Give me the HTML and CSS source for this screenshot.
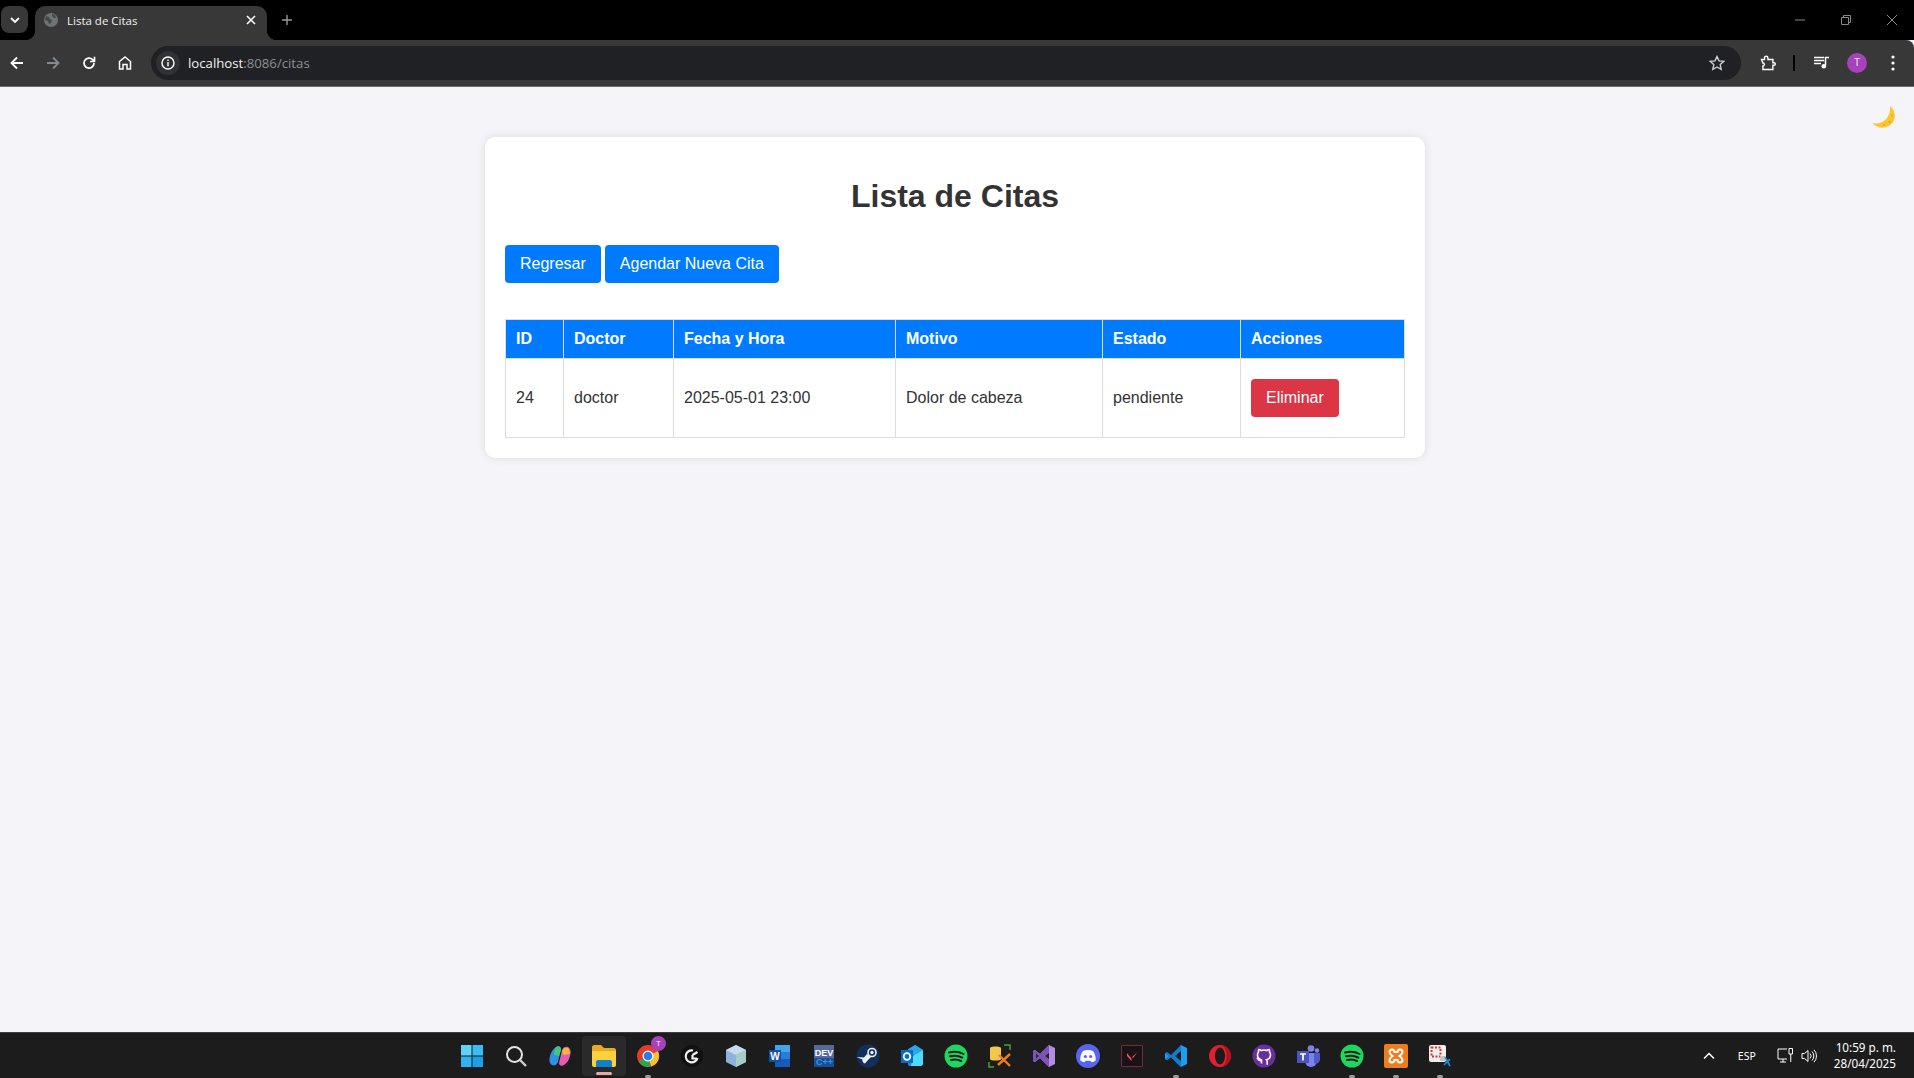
FILE: index.html
```html
<!DOCTYPE html>
<html lang="es">
<head>
  <meta charset="utf-8">
  <title>Lista de Citas</title>
  <link rel="stylesheet" href="styles.css">
</head>
<body>
  <!-- browser frame -->
  <header class="tabstrip">
    <div class="tab-search">
      <svg width="12" height="12" viewBox="0 0 12 12"><path d="M2 4l4 4 4-4" fill="none" stroke="#fff" stroke-width="1.8"/></svg>
    </div>
    <div class="tab">
      <svg class="tab-favicon" width="14" height="14" viewBox="0 0 14 14"><circle cx="7" cy="7" r="7" fill="#6f7276"/><path d="M2 3l3 1 1 2 2 1-1 3-2 1-1-3-3-1zM8 1l3 1 1 3-2 0-2-2z" fill="#44474b"/></svg>
      <span class="tab-title">Lista de Citas</span>
      <svg class="tab-close" width="10" height="10" viewBox="0 0 10 10"><path d="M1 1l8 8M9 1l-8 8" stroke="#fff" stroke-width="1.6"/></svg>
    </div>
    <svg class="tab-new" width="12" height="12" viewBox="0 0 12 12"><path d="M6 1v10M1 6h10" stroke="#9a9a9a" stroke-width="1.4"/></svg>
    <div class="window-controls">
      <svg width="12" height="12" viewBox="0 0 12 12"><path d="M1 6h10" stroke="#8a8a8a"/></svg>
      <svg width="12" height="12" viewBox="0 0 12 12"><path d="M1.5 3.5h7v7h-7zM3.5 3.5v-2h7v7h-2" fill="none" stroke="#8a8a8a"/></svg>
      <svg width="12" height="12" viewBox="0 0 12 12"><path d="M1 1l10 10M11 1L1 11" stroke="#8a8a8a"/></svg>
    </div>
  </header>

  <nav class="toolbar">
    <div class="nav-buttons">
      <svg width="16" height="16" viewBox="0 0 16 16"><path d="M14 8H3M8 2.5L2.5 8 8 13.5" fill="none" stroke="#fff" stroke-width="1.8"/></svg>
      <svg width="16" height="16" viewBox="0 0 16 16"><path d="M2 8h11M8 2.5L13.5 8 8 13.5" fill="none" stroke="#85888c" stroke-width="1.8"/></svg>
      <svg width="16" height="16" viewBox="0 0 16 16"><path d="M13 8a5 5 0 1 1-1.5-3.5L13.5 6.500M13.5 1.800v4.700H9" fill="none" stroke="#fff" stroke-width="1.7"/></svg>
      <svg width="16" height="16" viewBox="0 0 16 16"><path d="M2.500 14V6.500L8 2l5.500 4.500V14H10V9.500H6V14z" fill="none" stroke="#fff" stroke-width="1.5"/></svg>
    </div>
    <div class="omnibox">
      <span class="omnibox-chip">
        <svg width="14" height="14" viewBox="0 0 14 14"><circle cx="7" cy="7" r="6" fill="none" stroke="#fff" stroke-width="1.4"/><path d="M7 6v4.200M7 3.400v1.500" stroke="#fff" stroke-width="1.4"/></svg>
      </span>
      <span class="url"><span class="url-host">localhost</span>:8086/citas</span>
      <svg class="omnibox-star" width="16" height="16" viewBox="0 0 16 16"><path d="M8 1.500l2 4.400 4.700.5-3.500 3.200 1 4.700L8 12l-4.200 2.300 1-4.700L1.300 6.400 6 5.900z" fill="none" stroke="#d0d0d0" stroke-width="1.4"/></svg>
    </div>
    <div class="toolbar-actions">
      <svg class="ext-icon" width="16" height="16" viewBox="0 0 16 16"><path d="M1.500 4.500h3V3a1.700 1.700 0 0 1 3.400 0v1.500h5v3.200h1.100a1.300 1.300 0 0 1 0 2.600h-1.100v4.200h-10v-3.500a1.500 1.500 0 0 0 0-3z" fill="none" stroke="#fff" stroke-width="1.4"/></svg>
      <span class="toolbar-sep"></span>
      <svg class="media-icon" width="16" height="16" viewBox="0 0 16 16"><path d="M0 2.500h10M0 5.500h10M0 8.500h7" stroke="#fff" stroke-width="1.3"/><path d="M11.500 10.500V2.500H15" fill="none" stroke="#fff" stroke-width="1.5"/><circle cx="9.800" cy="11.200" r="2.300" fill="#fff"/></svg>
      <span class="avatar">T</span>
      <svg class="menu-icon" width="4" height="16" viewBox="0 0 4 16"><circle cx="2" cy="2" r="1.600" fill="#fff"/><circle cx="2" cy="8" r="1.600" fill="#fff"/><circle cx="2" cy="14" r="1.600" fill="#fff"/></svg>
    </div>
  </nav>

  <!-- page -->
  <main class="page">
    <button class="theme-toggle" type="button" aria-label="Tema">
      <svg width="24" height="24" viewBox="0 0 24 24"><path d="M18 1C22 4 24 10 22 15 19.500 21.500 11 24.500 5 21.500 3 20.500 1.500 19.500.5 18 6 19.500 12 17.500 15 13 17.500 9.500 18.500 5 18 1z" fill="#fcc62d"/><circle cx="17.500" cy="17" r="1.300" fill="#f2a81d"/><circle cx="12" cy="20" r="1.100" fill="#f2a81d"/><circle cx="20" cy="10.500" r="1" fill="#f2a81d"/></svg>
    </button>

    <section class="card">
      <h1>Lista de Citas</h1>
      <div class="actions">
        <a class="btn" href="#">Regresar</a>
        <a class="btn" href="#">Agendar Nueva Cita</a>
      </div>
      <table class="citas">
        <colgroup>
          <col class="col-id"><col class="col-doctor"><col class="col-fecha"><col class="col-motivo"><col class="col-estado"><col class="col-acciones">
        </colgroup>
        <thead>
          <tr>
            <th>ID</th>
            <th>Doctor</th>
            <th>Fecha y Hora</th>
            <th>Motivo</th>
            <th>Estado</th>
            <th>Acciones</th>
          </tr>
        </thead>
        <tbody>
          <tr>
            <td>24</td>
            <td>doctor</td>
            <td>2025-05-01 23:00</td>
            <td>Dolor de cabeza</td>
            <td>pendiente</td>
            <td><a class="btn btn-danger" href="#">Eliminar</a></td>
          </tr>
        </tbody>
      </table>
    </section>
  </main>

  <!-- windows taskbar -->
  <footer class="taskbar">
    <div class="task-list">
      <span class="task"><svg width="24" height="24" viewBox="0 0 24 24"><path d="M1 1h10.500v10.500H1z" fill="#5fd4f8"/><path d="M12.500 1H23v10.500H12.500z" fill="#38bdf4"/><path d="M1 12.500h10.500V23H1z" fill="#2fb3f0"/><path d="M12.500 12.500H23V23H12.500z" fill="#1a9fe8"/></svg></span>
      <span class="task"><svg width="24" height="24" viewBox="0 0 24 24"><circle cx="10.500" cy="10.500" r="7.500" fill="none" stroke="#e4e4e4" stroke-width="2"/><path d="M16 16l6 6" stroke="#cfcfcf" stroke-width="2.400"/></svg></span>
      <span class="task"><svg width="24" height="24" viewBox="0 0 24 24"><path d="M8 3c2.500-1.500 5-.5 5 2l-3 13c-1 3-4 4-6 3-3-2-3-5-2-9 1-4 3-7 6-9z" fill="#2f8fe0"/><path d="M8 3c2.500-1.500 5-.5 5 3l-2 6-5-1c0-3 0-6 2-8z" fill="#45c47a"/><path d="M16 21c-2.500 1.500-5 .5-5-2l3-13c1-3 4-4 6-3 3 2 3 5 2 9-1 4-3 7-6 9z" fill="#e85bb0"/><path d="M14 7c1-3 4-4 6-3 1 1 2 3 2 6l-7 1z" fill="#f7b33c"/></svg></span>
      <span class="task task-active is-open-wide"><svg width="26" height="26" viewBox="0 0 26 26"><path d="M1 4c0-1 1-2 2-2h7l3 3h10c1 0 2 1 2 2v2H1z" fill="#e9a922"/><path d="M1 8h24v14c0 1-1 2-2 2H3c-1 0-2-1-2-2z" fill="#fbd13e"/><path d="M7 17h12c1 0 2 1 2 2v5H5v-5c0-1 1-2 2-2z" fill="#0f7fd0"/></svg></span>
      <span class="task is-open"><svg width="24" height="24" viewBox="0 0 24 24"><circle cx="12" cy="12" r="11" fill="#e33b2e"/><path d="M12 12L22 7a11 11 0 0 1-7 15.500z" fill="#fbc02d"/><path d="M12 12l3 10.500A11 11 0 0 1 2.500 17.500z" fill="#2fa44f"/><circle cx="12" cy="12" r="5.500" fill="#fff"/><circle cx="12" cy="12" r="4.300" fill="#2a7de8"/></svg><span class="task-badge">T</span></span>
      <span class="task"><svg width="24" height="24" viewBox="0 0 24 24"><circle cx="12" cy="12" r="11" fill="#111"/><path d="M13 6.500A6 6 0 1 0 17.500 14M12.500 11v3.500H17M12.500 11L17.500 8" fill="none" stroke="#f2f2f2" stroke-width="2.200"/></svg></span>
      <span class="task"><svg width="24" height="24" viewBox="0 0 24 24"><path d="M12 1l10 5v12l-10 5-10-5V6z" fill="#8fb2dd"/><path d="M12 1l10 5-10 5L2 6z" fill="#c5dced"/><path d="M12 11l10-5v12l-10 5z" fill="#a8cbc8"/></svg></span>
      <span class="task"><svg width="24" height="24" viewBox="0 0 24 24"><path d="M7 1h15v22H7z" fill="#2b7cd3"/><path d="M7 1h15v7H7z" fill="#41a5ee"/><path d="M7 15h15v8H7z" fill="#185abd"/><path d="M1 6h12v12H1z" fill="#124fa8"/><text x="7" y="15.500" class="word-w">W</text></svg></span>
      <span class="task"><svg width="24" height="24" viewBox="0 0 24 24"><path d="M2 1h20v13H2z" fill="#56689e"/><path d="M2 14h20v9H2z" fill="#1b4f95"/><text x="12" y="11.500" class="dev-top">DEV</text><text x="12.500" y="21" class="dev-bottom">C++</text></svg></span>
      <span class="task"><svg width="24" height="24" viewBox="0 0 24 24"><circle cx="12" cy="12" r="11.500" fill="#10305c"/><circle cx="16" cy="8.500" r="4" fill="none" stroke="#eee" stroke-width="1.6"/><circle cx="16" cy="8.500" r="1.700" fill="#eee"/><path d="M.5 13l6 2.500a3.500 3.500 0 0 0 2.500 4l3-3.500 3-3-4-3-3 3.500z" fill="#eee"/></svg></span>
      <span class="task"><svg width="24" height="24" viewBox="0 0 24 24"><path d="M8 5l7-4 8 5v13c0 2-1 3-3 3H10c-2 0-2-1-2-3z" fill="#1490df"/><path d="M15 1l8 5-8 5-7-5z" fill="#28a8ea"/><path d="M13 12l10-6v13c0 2-1 3-3 3h-9z" fill="#50d9ff"/><path d="M1 6h12v13H1z" fill="#0a6ebd"/><circle cx="7" cy="12.500" r="3.300" fill="none" stroke="#fff" stroke-width="1.7"/></svg></span>
      <span class="task"><svg width="24" height="24" viewBox="0 0 24 24"><circle cx="12" cy="12" r="11.500" fill="#1ed760"/><path d="M5 8.500c5-1.500 10-1 14.500 1.500M6 12.300c4.500-1.200 8.500-.8 12.300 1.300M7 16c3.500-1 7-.6 10 1" fill="none" stroke="#1a1a1a" stroke-width="2" stroke-linecap="round"/></svg></span>
      <span class="task"><svg width="24" height="24" viewBox="0 0 24 24"><path d="M2 4c0-2 11-2 11 0v11c0 2-11 2-11 0z" fill="#f3c74a"/><path d="M16 1h6v5M1 18v5h5" fill="none" stroke="#4d9a3c" stroke-width="1.5"/><path d="M10 21l12-11M11 11l11 11" stroke="#f07a1c" stroke-width="2.400"/></svg></span>
      <span class="task"><svg width="24" height="24" viewBox="0 0 24 24"><path d="M17 1l6 3v16l-6 3-9-9-5 4-2-1V7l2-1 5 4z" fill="#b48ae6"/><path d="M1 7l2-1 5 4 9-9v7l-5 4 5 4v7l-9-9-5 4-2-1z" fill="#7a54b8"/><path d="M4 9.500v5l3-2.500zM12.500 12l4.500 3.500v-7z" fill="#2a2a2a"/></svg></span>
      <span class="task"><svg width="24" height="24" viewBox="0 0 24 24"><circle cx="12" cy="12" r="12" fill="#5865f2"/><path d="M7 7c3-1.200 7-1.200 10 0 2 3 3 6 2.700 9.500-1.500 1-3 1.500-4.200 1.800l-1-1.500H9.500l-1 1.500c-1.200-.3-2.700-.8-4.200-1.800C4 13 5 10 7 7z" fill="#fff"/><circle cx="9.300" cy="12.500" r="1.600" fill="#5865f2"/><circle cx="14.700" cy="12.500" r="1.600" fill="#5865f2"/></svg></span>
      <span class="task"><svg width="22" height="22" viewBox="0 0 22 22"><path d="M.5.500h21v21H.5z" fill="#1a1216" stroke="#6c2e3a"/><path d="M6 8l4.500 5.500V16L6 11zM16 7.500L12.500 12.500H10.500z" fill="#f0525c"/></svg></span>
      <span class="task is-open"><svg width="24" height="24" viewBox="0 0 24 24"><path d="M17 1l6 3v16l-6 3-10-10-4 3-2-1v-6l6 4z" fill="#1f9cf0"/><path d="M17 1L7 11 3 8 1 9l4 3-4 3 2 1 4-3 10 10z" fill="#0a7fd0"/><path d="M17 7l-6 5 6 5z" fill="#1a1a1a"/></svg></span>
      <span class="task"><svg width="24" height="24" viewBox="0 0 24 24"><circle cx="12" cy="12" r="11" fill="#e0202e"/><ellipse cx="12" cy="12" rx="5" ry="8.500" fill="#1a1a1a"/><path d="M12 1c6 0 11 5 11 11s-5 11-11 11c4 0 6.500-5 6.500-11S16 1 12 1z" fill="#b3101d"/></svg></span>
      <span class="task"><svg width="24" height="24" viewBox="0 0 24 24"><circle cx="12" cy="12" r="11.500" fill="#6a2f9e"/><path d="M9.500 19.500v-3c-2.500.5-3.500-1-4-2 2 0 2 1.500 4 1.200-3-.7-4-2.700-4-5 0-1 .4-2 1-2.700-.2-1 0-1.800.3-2.500 1 0 1.800.5 2.500 1a8 8 0 0 1 5.400 0c.7-.5 1.500-1 2.500-1 .3.700.5 1.500.3 2.500.6.700 1 1.700 1 2.700 0 2.300-1 4.300-4 5 .5.500.7 1.200.7 2v3" fill="none" stroke="#fff" stroke-width="1.6"/></svg></span>
      <span class="task"><svg width="24" height="24" viewBox="0 0 24 24"><circle cx="15" cy="4.500" r="3.300" fill="#7b83eb"/><circle cx="21" cy="6.500" r="2.300" fill="#7b83eb"/><path d="M12 9h8c.6 0 1 .4 1 1v7a6 6 0 0 1-12 0v-7c0-.6.400-1 1-1z" fill="#7b83eb"/><path d="M18 9h5c.6 0 1 .4 1 1v6a4 4 0 0 1-6 3z" fill="#5059c9"/><path d="M1 7h12v12H1z" fill="#4b53bc"/><path d="M4 10h6M7 10v6.500" stroke="#fff" stroke-width="1.7"/></svg></span>
      <span class="task is-open"><svg width="24" height="24" viewBox="0 0 24 24"><circle cx="12" cy="12" r="11.500" fill="#1ed760"/><path d="M5 8.500c5-1.500 10-1 14.500 1.500M6 12.300c4.500-1.200 8.500-.8 12.300 1.300M7 16c3.500-1 7-.6 10 1" fill="none" stroke="#1a1a1a" stroke-width="2" stroke-linecap="round"/></svg></span>
      <span class="task is-open"><svg width="24" height="24" viewBox="0 0 24 24"><rect width="24" height="24" rx="2" fill="#f07d1c"/><path d="M8 5.500a2.500 2.500 0 0 0-2.500 2.500c0 2 2 3 3 4-1 1-3 2-3 4a2.500 2.500 0 0 0 5 0h3a2.500 2.500 0 0 0 5 0c0-2-2-3-3-4 1-1 3-2 3-4a2.500 2.500 0 0 0-5 0h-3A2.500 2.500 0 0 0 8 5.500z" fill="none" stroke="#fff" stroke-width="2"/></svg></span>
      <span class="task is-open"><svg width="24" height="24" viewBox="0 0 24 24"><rect x="1" y="1" width="17" height="17" rx="2" fill="#efefef"/><path d="M3.500 3.500h9v9h-9z" fill="none" stroke="#d8382c" stroke-width="2" stroke-dasharray="2 1.500"/><path d="M12 12h5v5h-5z" fill="#c4c4c4"/><path d="M17 13l5 9M22 15l-6 6" stroke="#1a8fe0" stroke-width="1.6"/></svg></span>
    </div>
    <div class="tray">
      <svg class="tray-chevron" width="12" height="8" viewBox="0 0 12 8"><path d="M1 6.500L6 1.500l5 5" fill="none" stroke="#fff" stroke-width="1.5"/></svg>
      <span class="tray-lang">ESP</span>
      <svg class="tray-net" width="16" height="16" viewBox="0 0 16 16"><path d="M10 1H1v10h9M3 14h6M6 11v3" fill="none" stroke="#fff"/><path d="M12 .5h3.500v5.500H12zM13.750 6v8" fill="none" stroke="#fff"/></svg>
      <svg class="tray-vol" width="16" height="16" viewBox="0 0 16 16"><path d="M1 5.500h2.500L7 2.500v11l-3.500-3H1z" fill="none" stroke="#fff"/><path d="M9 5.500a3.500 3.500 0 0 1 0 5M11 3.500a6.500 6.500 0 0 1 0 9M13 1.800a9 9 0 0 1 0 12.400" fill="none" stroke="#fff"/></svg>
      <div class="tray-clock">
        <span>10:59 p. m.</span>
        <span>28/04/2025</span>
      </div>
    </div>
  </footer>
</body>
</html>
```

FILE: styles.css
```css
* {
  box-sizing: border-box;
}

html,
body {
  height: 100%;
}

body {
  margin: 0;
  display: flex;
  flex-direction: column;
  overflow: hidden;
  background-color: #f4f4f9;
  color: #333;
  font-family: "Liberation Sans", Arial, sans-serif;
  font-size: 16px;
}

svg {
  display: block;
  flex: none;
}

/* Browser frame */
.tabstrip {
  height: 40px;
  flex: none;
  display: flex;
  align-items: flex-start;
  background-color: #000;
}

.tab-search {
  width: 27px;
  height: 27px;
  margin: 6px 7px 0 1px;
  display: flex;
  align-items: center;
  justify-content: center;
  border-radius: 8px;
  background-color: #383838;
}

.tab {
  position: relative;
  width: 232px;
  height: 34px;
  margin-top: 6px;
  padding: 0 11px 6px 9px;
  display: flex;
  align-items: center;
  gap: 9px;
  border-radius: 10px 10px 0 0;
  background-color: #383838;
}

.tab::before,
.tab::after {
  content: "";
  position: absolute;
  bottom: 0;
  width: 10px;
  height: 10px;
}

.tab::before {
  left: -10px;
  background: radial-gradient(circle at 0 0, transparent 10px, #383838 10.5px);
}

.tab::after {
  right: -10px;
  background: radial-gradient(circle at 100% 0, transparent 10px, #383838 10.5px);
}

.tab-title {
  flex: 1;
  color: #f1f1f1;
  font-family: "Open Sans", sans-serif;
  font-size: 11.5px;
}

.tab-new {
  margin: 14px 0 0 14px;
}

.window-controls {
  margin-left: auto;
  padding: 14px 16px 0 0;
  display: flex;
  gap: 34px;
}

.toolbar {
  height: 47px;
  flex: none;
  padding: 6px 0 7px;
  display: flex;
  align-items: center;
  border-radius: 0 8px 0 0;
  border-bottom: 1px solid #6a6a6a;
  background-color: #383838;
}

.nav-buttons {
  width: 151px;
  padding-left: 9px;
  display: flex;
  gap: 20px;
}

.omnibox {
  width: 1590px;
  height: 34px;
  padding: 0 16px 0 5px;
  display: flex;
  align-items: center;
  border-radius: 17px;
  background-color: #202124;
}

.omnibox-chip {
  width: 24px;
  height: 24px;
  display: flex;
  align-items: center;
  justify-content: center;
  border-radius: 50%;
  background-color: #303134;
}

.url {
  flex: 1;
  margin-left: 8px;
  color: #8e8f92;
  font-family: "Open Sans", sans-serif;
  font-size: 13.2px;
}

.url-host {
  color: #f1f1f1;
}

.toolbar-actions {
  flex: 1;
  padding-left: 19px;
  display: flex;
  align-items: center;
}

.toolbar-sep {
  width: 2px;
  height: 16px;
  margin: 0 19px 0 17px;
  background-color: #000;
}

.avatar {
  width: 20px;
  height: 20px;
  margin: 0 24px 0 17px;
  display: flex;
  align-items: center;
  justify-content: center;
  border-radius: 50%;
  background-color: #a742bd;
  color: #eee;
  font-size: 10px;
}

/* Page */
.page {
  flex: 1;
  position: relative;
  padding: 50px 4px 0 0;
}

.theme-toggle {
  position: absolute;
  top: 18px;
  right: 18px;
  padding: 0;
  border: 0;
  background: none;
}

.card {
  width: 940px;
  margin: 0 auto;
  padding: 20px;
  border-radius: 10px;
  background-color: #fff;
  box-shadow: 0 0 10px rgba(0, 0, 0, 0.1);
}

h1 {
  margin: 21px 0 30px;
  color: #333;
  font-size: 32px;
  line-height: 37px;
  text-align: center;
}

.actions {
  display: flex;
  gap: 4px;
  margin-bottom: 36px;
}

.btn {
  display: inline-block;
  padding: 10px 15px;
  border-radius: 4px;
  background-color: #007bff;
  color: #fff;
  font-size: 16px;
  line-height: 18px;
  text-decoration: none;
}

.btn-danger {
  margin: 10px 0;
  vertical-align: top;
  background-color: #dc3545;
}

.citas {
  width: 899px;
  border-collapse: collapse;
  table-layout: fixed;
}

.col-id { width: 58px; }
.col-doctor { width: 110px; }
.col-fecha { width: 222px; }
.col-motivo { width: 207px; }
.col-estado { width: 138px; }
.col-acciones { width: 164px; }

.citas th,
.citas td {
  padding: 10px;
  border: 1px solid #ddd;
  line-height: 18px;
  text-align: left;
}

.citas th {
  background-color: #007bff;
  color: #fff;
}

/* Taskbar */
.taskbar {
  height: 46px;
  flex: none;
  position: relative;
  display: flex;
  justify-content: center;
  border-top: 1px solid #3e3e3e;
  background-color: #1c1c1c;
}

.task-list {
  margin-right: 2px;
  display: flex;
}

.task {
  position: relative;
  width: 44px;
  height: 45px;
  display: flex;
  align-items: center;
  justify-content: center;
}

.task-active {
  height: 40px;
  margin-top: 3px;
  border-radius: 4px;
  background-color: #2a2a2a;
}

.is-open::after,
.is-open-wide::after {
  content: "";
  position: absolute;
  bottom: 0;
  left: 50%;
  width: 6px;
  height: 3px;
  margin-left: -3px;
  border-radius: 2px;
  background-color: #9a9a9a;
}

.is-open-wide::after {
  bottom: 1px;
  width: 16px;
  margin-left: -8px;
  background-color: #eda79f;
}

.task-badge {
  position: absolute;
  top: 3px;
  right: 4px;
  width: 15px;
  height: 15px;
  display: flex;
  align-items: center;
  justify-content: center;
  border-radius: 50%;
  background-color: #a742bd;
  color: #eee;
  font-size: 8px;
}

.word-w,
.dev-top,
.dev-bottom {
  font-family: "Liberation Sans", sans-serif;
  font-weight: bold;
  text-anchor: middle;
}

.word-w {
  fill: #fff;
  font-size: 10px;
}

.dev-top {
  fill: #fff;
  font-size: 9px;
}

.dev-bottom {
  fill: #2d9ae8;
  font-size: 9px;
}

.tray {
  position: absolute;
  top: 0;
  right: 18px;
  height: 45px;
  display: flex;
  align-items: center;
  color: #fff;
}

.tray-lang {
  width: 28px;
  margin: 0 16px 0 18px;
  font-family: "Noto Sans", sans-serif;
  font-size: 10.5px;
  text-align: center;
}

.tray-vol {
  margin: 0 17px 0 8px;
}

.tray-clock {
  display: flex;
  flex-direction: column;
  align-items: flex-end;
  gap: 1px;
  font-family: "Noto Sans", sans-serif;
  font-size: 11.7px;
  line-height: 15px;
}
```
